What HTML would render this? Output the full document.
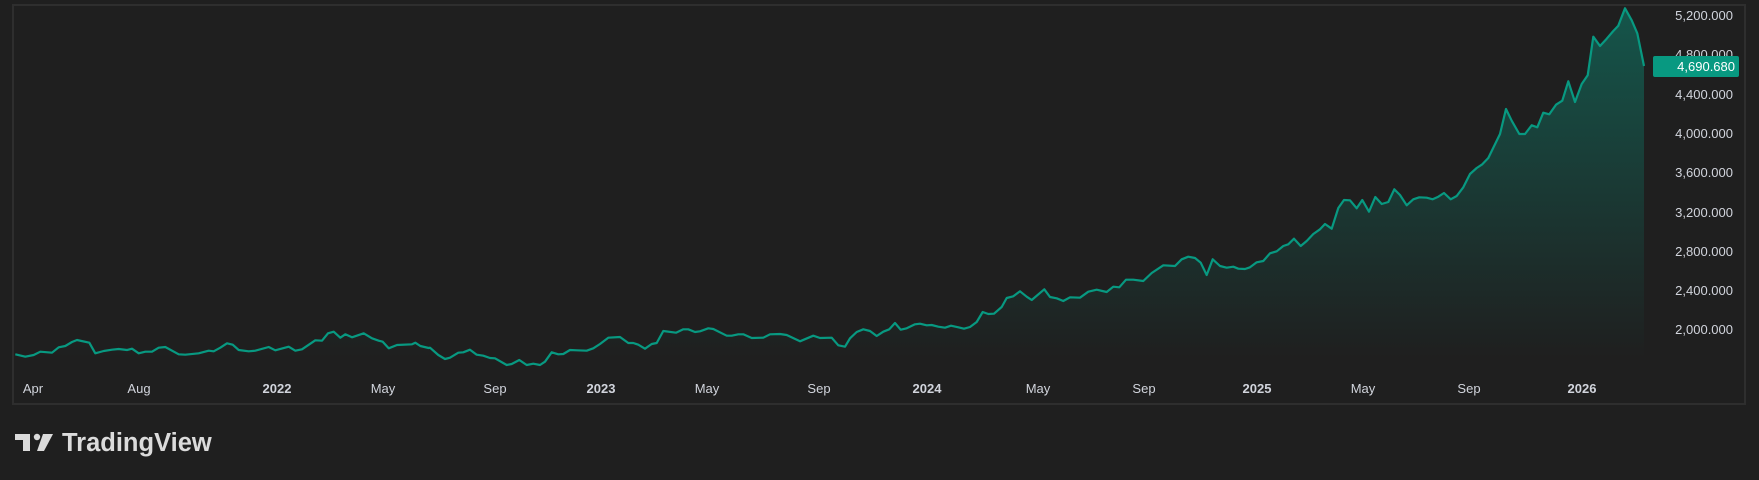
<!DOCTYPE html>
<html><head><meta charset="utf-8"><style>
html,body{margin:0;padding:0;background:#1f1f1f;width:1759px;height:480px;overflow:hidden;font-family:"Liberation Sans",sans-serif}
svg{position:absolute;left:0;top:0}
</style></head><body>
<svg width="1759" height="480" viewBox="0 0 1759 480">
<defs><linearGradient id="g" gradientUnits="userSpaceOnUse" x1="0" y1="5" x2="0" y2="358">
<stop offset="0" stop-color="#089981" stop-opacity="0.45"/>
<stop offset="1" stop-color="#089981" stop-opacity="0.0"/></linearGradient></defs>
<rect x="13" y="5" width="1732" height="399" fill="none" stroke="#2e2e2e" stroke-width="2"/>
<path id="fill" fill="url(#g)"/>
<path id="line" fill="none" stroke="#089981" stroke-width="2.2" stroke-linejoin="round"/>
<g fill="#d1d4dc" font-size="13" text-anchor="end">
<text x="1733" y="20">5,200.000</text>
<text x="1733" y="59">4,800.000</text>
<text x="1733" y="99">4,400.000</text>
<text x="1733" y="138">4,000.000</text>
<text x="1733" y="177">3,600.000</text>
<text x="1733" y="217">3,200.000</text>
<text x="1733" y="256">2,800.000</text>
<text x="1733" y="295">2,400.000</text>
<text x="1733" y="334">2,000.000</text>
</g>
<rect x="1653" y="56" width="86" height="21" rx="2" fill="#089981"/>
<text x="1735" y="71" fill="#fff" font-size="13" text-anchor="end">4,690.680</text>
<g fill="#d1d4dc" font-size="13" text-anchor="middle">
<text x="33" y="393">Apr</text><text x="139" y="393">Aug</text>
<text x="277" y="393" font-weight="bold">2022</text><text x="383" y="393">May</text>
<text x="495" y="393">Sep</text><text x="601" y="393" font-weight="bold">2023</text>
<text x="707" y="393">May</text><text x="819" y="393">Sep</text>
<text x="927" y="393" font-weight="bold">2024</text><text x="1038" y="393">May</text>
<text x="1144" y="393">Sep</text><text x="1257" y="393" font-weight="bold">2025</text>
<text x="1363" y="393">May</text><text x="1469" y="393">Sep</text>
<text x="1582" y="393" font-weight="bold">2026</text>
</g>
<g fill="#dbdbdb">
<path d="M15 434H30V451H23V440H15Z"/>
<circle cx="37" cy="437" r="3.2"/>
<path d="M43 434H53L44 451H37Z"/>
<text x="62" y="451" font-size="25.5" font-weight="bold">TradingView</text>
</g>
</svg>
<script>
function seg(x0,y0,a){var r=[];for(var i=0;i<a.length;i+=2)r.push([x0+a[i]/3,y0+a[i+1]/3]);return r;}
var p=[].concat(
seg(12,300,[10,163,40,170,65,165,85,155,120,158,140,142,160,138,180,126,195,120,232,128,250,160,275,153,300,149,320,147,345,150,360,146,380,160,400,155,420,155,440,143,460,141,500,163,520,164,560,160,590,152,605,154,625,143,645,130,662,134,680,150,710,154,730,152,770,141,790,151,830,140,850,152,870,148,910,121,930,122,948,100,965,95,985,113,1000,103,1020,112,1055,100,1080,115,1100,122,1112,125,1130,145,1155,135,1200,133,1210,128,1225,138,1250,144]),
seg(430,300,[0,143,25,165,45,177,60,173,85,158,100,157,120,149,140,164,160,167,180,174,195,175,230,195,245,192,268,180,290,195,310,191,330,195,345,185,365,157,385,163,400,162,420,150,440,151,470,152,490,145,510,132,535,113,570,111,595,129,610,129,625,134,645,146,665,132,680,129,700,93,738,98,760,88,775,88,795,96,810,94,835,85,850,87,890,107,905,107,925,103,940,103,965,114,1000,113,1020,103,1050,102,1070,105,1110,124,1150,107,1170,114,1205,113,1225,136,1245,140]),
seg(850,180,[0,475,20,456,40,448,60,453,80,468,100,455,118,448,135,429,152,449,170,445,195,433,210,431,230,436,245,435,265,440,285,443,303,437,325,442,342,446,360,441,380,426,398,396,415,402,432,401,455,381,470,354,490,349,510,334,530,350,545,360,583,328,600,351,620,355,640,363,660,352,690,353,715,335,740,329,770,336,790,320,808,322,828,299,850,299,880,303,905,279,940,256,975,258,995,238,1015,230,1035,234,1052,248,1070,285,1088,238,1110,258,1130,263,1150,260,1165,266,1185,267,1200,262,1220,247,1240,243]),
seg(1270,0,[0,760,20,754,40,738,55,733,72,716,92,738,110,723,130,702,150,688,165,672,185,686,205,624,222,600,240,601,260,625,277,600,297,635,316,591,335,612,355,606,373,568,390,585,410,616,430,598,448,592,470,593,488,598,505,590,522,579,542,598,560,588,580,562,600,522,620,504,637,493,655,474,690,402,708,327,725,362,748,402,765,402,785,376,802,382,820,338,838,343,858,314,877,302,895,244,915,306,935,252,953,226,970,110,990,138,1010,116,1030,93,1045,77,1065,25,1085,61,1102,100,1122,198]));
var d='M'+p.map(function(q){return q[0].toFixed(1)+' '+q[1].toFixed(1)}).join('L');
document.getElementById('line').setAttribute('d',d);
document.getElementById('fill').setAttribute('d',d+'L'+p[p.length-1][0].toFixed(1)+' 358L'+p[0][0].toFixed(1)+' 358Z');
</script>
</body></html>
